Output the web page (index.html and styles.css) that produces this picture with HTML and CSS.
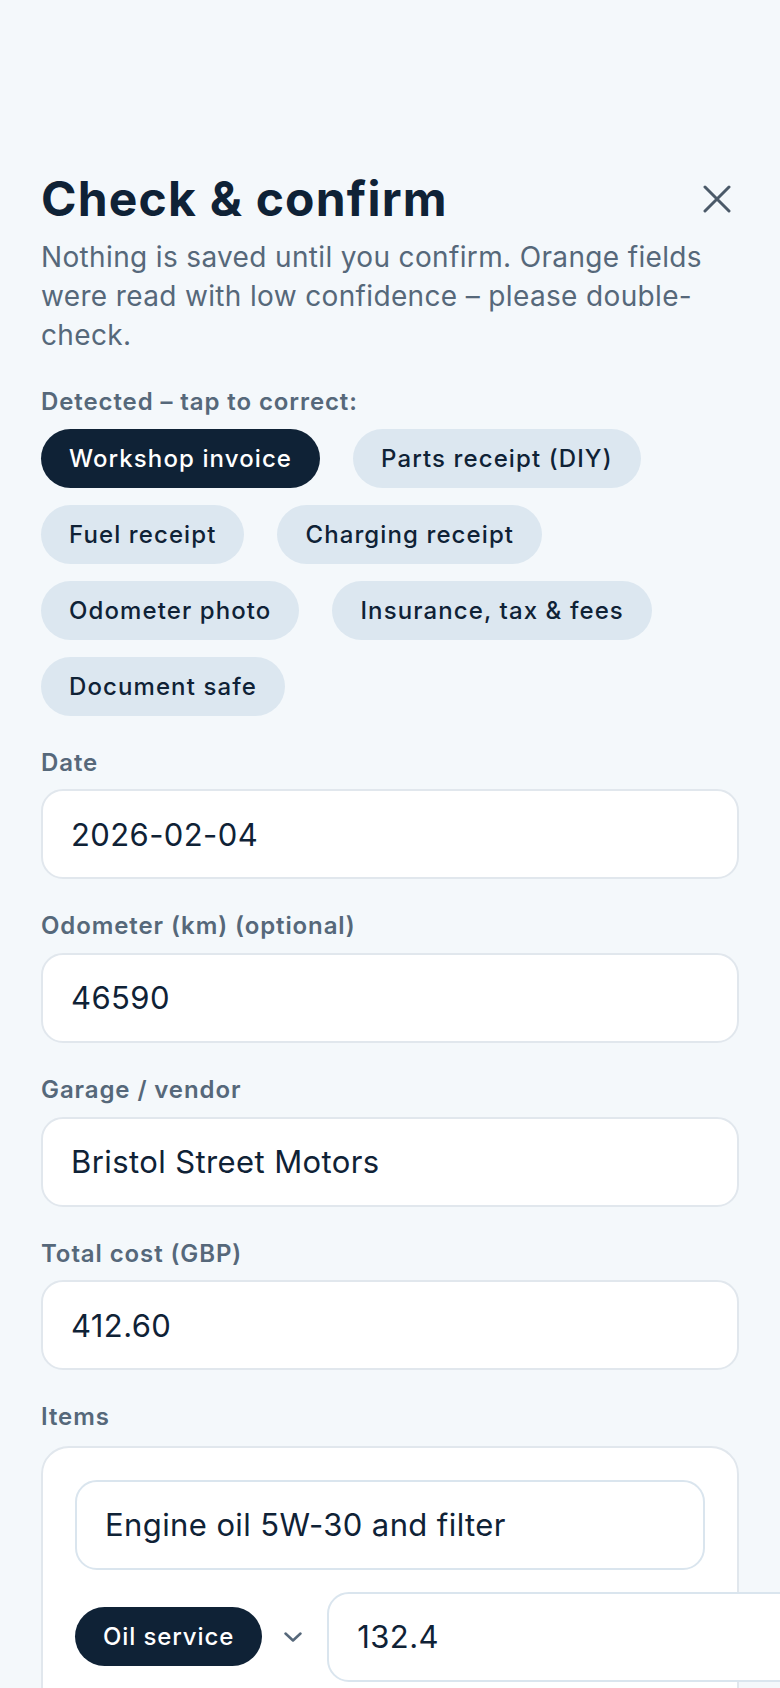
FILE: index.html
```html
<!DOCTYPE html>
<html lang="en">
    <head>
        <meta charset="UTF-8" />
        <meta name="viewport" content="width=device-width, initial-scale=1.0" />
        <link rel="stylesheet" href="styles.css">
    </head>
    <body>
        <div class="sheet">
            <div class="sheet-header">
                <h1>Check &amp; confirm</h1>
                <button class="close" aria-label="Close">
                    <svg width="28" height="28" viewBox="0 0 28 28" fill="none" stroke="currentColor" stroke-width="3" stroke-linecap="round">
                        <path d="M2 2 L26 26 M26 2 L2 26" />
                    </svg>
                </button>
            </div>
            <p class="intro">Nothing is saved until you confirm. Orange fields were read with low confidence – please double-check.</p>

            <p class="label">Detected – tap to correct:</p>
            <div class="chips">
                <span class="chip active">Workshop invoice</span>
                <span class="chip">Parts receipt (DIY)</span>
                <span class="chip">Fuel receipt</span>
                <span class="chip">Charging receipt</span>
                <span class="chip">Odometer photo</span>
                <span class="chip">Insurance, tax &amp; fees</span>
                <span class="chip">Document safe</span>
            </div>

            <div class="field">
                <label class="label" for="date">Date</label>
                <input class="input" id="date" type="text" value="2026-02-04">
            </div>
            <div class="field">
                <label class="label" for="odo">Odometer (km) (optional)</label>
                <input class="input" id="odo" type="text" value="46590">
            </div>
            <div class="field">
                <label class="label" for="vendor">Garage / vendor</label>
                <input class="input" id="vendor" type="text" value="Bristol Street Motors">
            </div>
            <div class="field">
                <label class="label" for="total">Total cost (GBP)</label>
                <input class="input" id="total" type="text" value="412.60">
            </div>

            <div class="field">
                <p class="label">Items</p>
                <div class="items">
                    <input class="input inner" type="text" value="Engine oil 5W-30 and filter">
                    <div class="item-row">
                        <div class="cat-select">
                            <span class="pill">Oil service</span>
                            <svg class="chevron" width="18" height="10" viewBox="0 0 18 10" fill="none" stroke="currentColor" stroke-width="2.5" stroke-linecap="round" stroke-linejoin="round">
                                <path d="M1.5 1.5 L9 8.5 L16.5 1.5" />
                            </svg>
                        </div>
                        <input class="input inner amount" type="text" value="132.4">
                    </div>
                </div>
            </div>
        </div>
    </body>
</html>
```

FILE: styles.css
```css
:root {
    --ink: #0f2236;
    --muted: #56687a;
    --line: #e1e7ed;
    --chip: #dce7f0;
}
* {
    box-sizing: border-box;
}
body {
    margin: 0;
    background-color: #f4f8fb;
    color: var(--ink);
    font-family: Inter, "Noto Sans", sans-serif;
}
.sheet {
    height: 100vh;
    overflow: hidden;
    padding: 170px 41px 0 41px;
}
.sheet-header {
    display: flex;
    align-items: center;
    justify-content: space-between;
}
h1 {
    margin: 0;
    font-size: 48px;
    line-height: 1.2;
    font-weight: 700;
    letter-spacing: 1.2px;
}
.close {
    width: 44px;
    height: 44px;
    padding: 0;
    border: none;
    background: none;
    color: #4b5a69;
    display: flex;
    align-items: center;
    justify-content: center;
}
.intro {
    margin: 10px 0 0 0;
    font-size: 28px;
    line-height: 1.4;
    letter-spacing: 0.35px;
    color: var(--muted);
}
.label {
    display: block;
    margin: 30px 0 10px 0;
    font-size: 24px;
    line-height: 1.4;
    font-weight: 600;
    letter-spacing: 0.9px;
    color: var(--muted);
}
.chips {
    display: flex;
    flex-wrap: wrap;
    gap: 17px 33px;
    margin-top: 1px;
}
.chip,
.pill {
    display: inline-flex;
    align-items: center;
    height: 59px;
    padding: 0 28px;
    border-radius: 30px;
    background-color: var(--chip);
    font-size: 24px;
    font-weight: 500;
    letter-spacing: 1.1px;
    color: var(--ink);
}
.chip.active,
.pill {
    background-color: var(--ink);
    color: white;
}
.pill {
    letter-spacing: 0.9px;
}
.field .label {
    margin-top: 30px;
}
.input {
    display: block;
    width: 100%;
    height: 90px;
    padding: 0 28px;
    border: 2px solid var(--line);
    border-radius: 22px;
    background-color: white;
    font-family: inherit;
    font-size: 31px;
    letter-spacing: 0.4px;
    color: var(--ink);
    outline: none;
}
.items {
    margin-top: 12px;
    padding: 32px;
    border: 2px solid var(--line);
    border-radius: 28px;
    background-color: white;
    display: flex;
    flex-direction: column;
    gap: 22px;
}
.input.inner {
    border-color: #dae5ee;
}
.item-row {
    display: flex;
    align-items: center;
    gap: 25px;
}
.cat-select {
    display: flex;
    align-items: center;
    gap: 22px;
    flex-shrink: 0;
}
.chevron {
    color: var(--muted);
}
.input.amount {
    flex: 0 0 480px;
}
```
